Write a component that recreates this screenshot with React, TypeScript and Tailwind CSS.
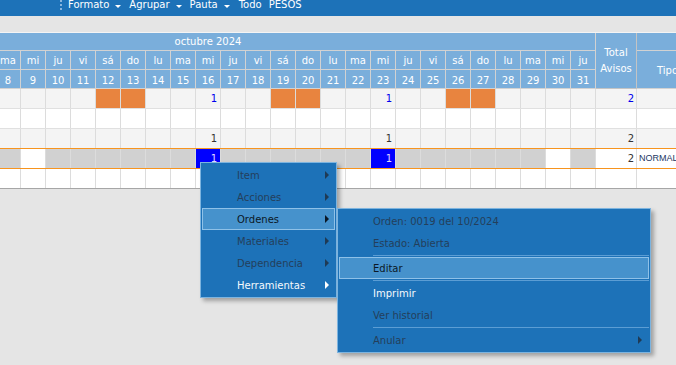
import React, { useLayoutEffect, useRef } from 'react';

const dayNames = ['lu', 'ma', 'mi', 'ju', 'vi', 'sá', 'do'];
const days = Array.from({ length: 31 }, (_, i) => {
  const n = i + 1;
  return { n, name: dayNames[n % 7], weekend: n % 7 === 5 || n % 7 === 6 };
});

type Row = {
  bg: string;
  line: string;
  cell: (n: number) => { bg?: string; text?: string; color?: string };
  total?: { text: string; color: string; bg?: string };
  tipo?: string;
  tipoBg?: string;
};

const rows: Row[] = [
  {
    bg: 'bg-[#f4f4f4]',
    line: 'border-[#e0e0e0]',
    cell: (n) => ({
      bg: [5, 6, 12, 13, 19, 20, 26, 27].includes(n) ? 'bg-[#e8843f]' : undefined,
      text: n === 16 || n === 23 ? '1' : undefined,
      color: 'text-[#0000ee]',
    }),
    total: { text: '2', color: 'text-[#0000ee]' },
  },
  { bg: 'bg-white', line: 'border-[#e0e0e0]', cell: () => ({}) },
  {
    bg: 'bg-[#f4f4f4]',
    line: 'border-[#f7941e]',
    cell: (n) => ({ text: n === 16 || n === 23 ? '1' : undefined, color: 'text-[#333333]' }),
    total: { text: '2', color: 'text-[#333333]' },
  },
  {
    bg: 'bg-[#d1d1d1]',
    line: 'border-[#f7941e]',
    cell: (n) =>
      n === 16 || n === 23
        ? { bg: 'bg-[#0000ff]', text: '1', color: 'text-[#e2dcff]' }
        : n === 9 || n === 30
          ? { bg: 'bg-white' }
          : {},
    total: { text: '2', color: 'text-[#333333]', bg: 'bg-white' },
    tipo: 'NORMAL',
    tipoBg: 'bg-white',
  },
  { bg: 'bg-white', line: 'border-[#a6a6a6]', cell: () => ({}) },
];

const Caret = () => (
  <span className="ml-[6px] mr-[8px] mt-[5px] h-0 w-0 border-x-[3px] border-t-[3px] border-x-transparent border-t-white" />
);

const TopBar = () => (
  <div className="flex h-4 items-start bg-[#1d72b8] pl-[60px] leading-[10px] text-white">
    <span className="mr-[6px] h-[10px] border-l-2 border-dotted border-[#8ab6de]" />
    <span>Formato</span>
    <Caret />
    <span>Agrupar</span>
    <Caret />
    <span>Pauta</span>
    <Caret />
    <span className="ml-[1px]">Todo</span>
    <span className="ml-[7px]">PESOS</span>
  </div>
);

const Arrow = ({ color }: { color: string }) => (
  <span className={`h-0 w-0 border-y-[4px] border-l-[4px] border-y-transparent ${color}`} />
);

type Item = { label: string; tone: 'off' | 'on' | 'hi'; sub?: boolean };

const toneText = { off: 'text-[#243f5b]', on: 'text-[#f5f9fd]', hi: 'text-[#0b1826]' };
const toneArrow = { off: 'border-l-[#1f3a55]', on: 'border-l-white', hi: 'border-l-[#0b1826]' };

const MenuItem = ({ item, pl, pr }: { item: Item; pl: string; pr: string }) => (
  <div
    className={`flex h-[22px] items-center justify-between border ${pl} ${pr} ${toneText[item.tone]} ${
      item.tone === 'hi' ? 'border-[#8ec1e8] bg-[#4692cc]' : 'border-transparent'
    }`}
  >
    <span>{item.label}</span>
    {item.sub && <Arrow color={toneArrow[item.tone]} />}
  </div>
);

const Separator = () => (
  <div className="py-px pl-[34px]">
    <div className="h-px bg-[#5b9dd4]" />
  </div>
);

const mainItems: Item[] = [
  { label: 'Item', tone: 'off', sub: true },
  { label: 'Acciones', tone: 'off', sub: true },
  { label: 'Ordenes', tone: 'hi', sub: true },
  { label: 'Materiales', tone: 'off', sub: true },
  { label: 'Dependencia', tone: 'off', sub: true },
  { label: 'Herramientas', tone: 'on', sub: true },
];

const ContextMenus = () => (
  <>
    <div className="absolute left-[200px] top-[162px] w-[137px] border border-[#7db4df] bg-[#1d72b8] p-px shadow-[3px_3px_4px_rgba(0,0,0,0.3)]">
      {mainItems.map((it) => (
        <MenuItem key={it.label} item={it} pl="pl-[34px]" pr="pr-[5px]" />
      ))}
    </div>
    <div className="absolute left-[337px] top-[208px] w-[314px] border border-[#7db4df] bg-[#1d72b8] p-px shadow-[3px_3px_4px_rgba(0,0,0,0.3)]">
      <MenuItem item={{ label: 'Orden: 0019 del 10/2024', tone: 'off' }} pl="pl-[33px]" pr="pr-[6px]" />
      <MenuItem item={{ label: 'Estado: Abierta', tone: 'off' }} pl="pl-[33px]" pr="pr-[6px]" />
      <Separator />
      <MenuItem item={{ label: 'Editar', tone: 'hi' }} pl="pl-[33px]" pr="pr-[6px]" />
      <Separator />
      <MenuItem item={{ label: 'Imprimir', tone: 'on' }} pl="pl-[33px]" pr="pr-[6px]" />
      <MenuItem item={{ label: 'Ver historial', tone: 'off' }} pl="pl-[33px]" pr="pr-[6px]" />
      <Separator />
      <MenuItem item={{ label: 'Anular', tone: 'off', sub: true }} pl="pl-[33px]" pr="pr-[6px]" />
    </div>
  </>
);

export default function App() {
  const scroller = useRef<HTMLDivElement>(null);

  useLayoutEffect(() => {
    if (scroller.current) scroller.current.scrollLeft = 179;
  }, []);

  return (
    <div className="relative min-h-screen bg-[#e5e5e5] font-['DejaVu_Sans',sans-serif] text-[10px]">
      <TopBar />
      <div className="h-4" />

      <div ref={scroller} className="overflow-hidden">
        <div className="w-max border-t border-[#f4f4f4]">
          {/* Header */}
          <div className="flex bg-[#7aaedb] text-white">
            <div className="flex flex-col">
              <div className="flex h-[18px] items-center justify-center border-b border-r border-[#d2d2d2]">
                octubre 2024
              </div>
              <div className="flex">
                {days.map((d) => (
                  <div
                    key={d.n}
                    className="flex h-[19px] w-[25px] items-center justify-center border-b border-r border-[#d2d2d2] pt-px"
                  >
                    {d.name}
                  </div>
                ))}
              </div>
              <div className="flex">
                {days.map((d) => (
                  <div
                    key={d.n}
                    className="flex h-[19px] w-[25px] items-center justify-center border-b border-r border-[#d2d2d2] pt-[2px]"
                  >
                    {d.n}
                  </div>
                ))}
              </div>
            </div>
            <div className="flex w-[41px] items-center justify-center border-b border-r border-[#c4c4c4] text-center leading-[16px]">
              Total
              <br />
              Avisos
            </div>
            <div className="flex flex-col">
              <div className="h-[18px] border-b border-r border-[#d2d2d2]" />
              <div className="flex flex-1">
                <div className="flex w-[62px] items-center justify-center border-b border-r border-[#d2d2d2] pt-[2px]">
                  Tipo
                </div>
                <div className="w-[90px] border-b border-r border-[#d2d2d2]" />
              </div>
            </div>
          </div>

          {/* Rows */}
          {rows.map((r, i) => (
            <div key={i} className={`flex h-[20px] border-b ${r.line} ${r.bg}`}>
              {days.map((d) => {
                const c = r.cell(d.n);
                return (
                  <div
                    key={d.n}
                    className={`flex w-[25px] items-center justify-end border-r border-[#dcdcdc] pr-[3px] ${c.bg ?? ''} ${c.color ?? ''}`}
                  >
                    {c.text}
                  </div>
                );
              })}
              <div
                className={`flex w-[41px] items-center justify-end border-r border-[#dcdcdc] pr-[2px] ${r.total?.bg ?? ''} ${r.total?.color ?? ''}`}
              >
                {r.total?.text}
              </div>
              <div
                className={`flex w-[62px] items-center border-r border-[#dcdcdc] pl-[2px] font-['Liberation_Sans',sans-serif] text-[9px] text-[#1c3763] ${r.tipoBg ?? ''}`}
              >
                {r.tipo}
              </div>
              <div className="w-[90px] border-r border-[#dcdcdc]" />
            </div>
          ))}
        </div>
      </div>

      <ContextMenus />
    </div>
  );
}
